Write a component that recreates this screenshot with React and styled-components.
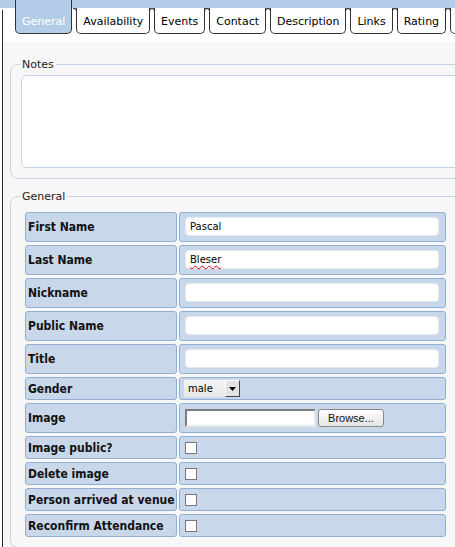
import { Fragment } from "react";
import styled, { createGlobalStyle } from "styled-components";

const tabs = ["General", "Availability", "Events", "Contact", "Description", "Links", "Rating", ""];

const textFields = [
  { label: "First Name", value: "Pascal" },
  { label: "Last Name", value: "Bleser", misspelled: true },
  { label: "Nickname", value: "" },
  { label: "Public Name", value: "" },
  { label: "Title", value: "" },
];

const checkFields = ["Image public?", "Delete image", "Person arrived at venue", "Reconfirm Attendance"];

const GlobalStyle = createGlobalStyle`
  html, body {
    margin: 0;
    padding: 0;
    overflow: hidden;
    background: #fff;
  }
  body {
    font-family: "DejaVu Sans", Verdana, sans-serif;
  }
`;

const Page = styled.div`
  width: 480px;
  min-height: 547px;
  background:
    linear-gradient(#b3cde9, #b3cde9) 0 0 / 100% 8px no-repeat,
    linear-gradient(#2b2b2b, #2b2b2b) 2px 10px / 1px 100% no-repeat,
    #fff;
`;

const TabBar = styled.div`
  display: flex;
  align-items: flex-start;
  gap: 4px;
  height: 34px;
  padding-left: 15px;
`;

const Tab = styled.div`
  position: relative;
  box-sizing: border-box;
  min-width: 30px;
  height: ${({ active }) => (active ? "34px" : "26px")};
  margin-top: ${({ active }) => (active ? "0" : "8px")};
  padding: 0 6px;
  padding-top: ${({ active }) => (active ? "15px" : "7px")};
  border: 1px solid #333;
  border-top: none;
  border-radius: 0 0 5px 5px;
  background: ${({ active }) => (active ? "#b3cde9" : "#fff")};
  color: ${({ active }) => (active ? "#fff" : "#000")};
  font-size: 11px;
  line-height: 14px;
  white-space: nowrap;

  &::before,
  &::after {
    content: "";
    position: absolute;
    top: 0;
    width: 3px;
    height: 3px;
    border-top: 1px solid #333;
    display: ${({ active }) => (active ? "none" : "block")};
  }
  &::before {
    left: -4px;
    border-right: 1px solid #333;
    border-top-right-radius: 3px;
  }
  &::after {
    right: -4px;
    border-left: 1px solid #333;
    border-top-left-radius: 3px;
  }
`;

const Content = styled.div`
  margin: 8px 0 0 3px;
  padding: 16px 0 20px 7px;
  background: #f7f7f7;
  min-height: 490px;
`;

const Fieldset = styled.fieldset`
  margin: ${({ first }) => (first ? "0" : "11px 0 0 0")};
  padding: ${({ first }) => (first ? "4px 0 10px 10px" : "9px 0 10px 14px")};
  border: 1px solid #c3d4ea;
  border-radius: 8px;
  min-width: 0;
`;

const Legend = styled.legend`
  margin-left: ${({ offset }) => offset}px;
  padding: 0 2px;
  font-size: 11px;
  line-height: 13px;
  color: #222;
`;

const Notes = styled.textarea`
  display: block;
  box-sizing: border-box;
  width: 100%;
  height: 93px;
  margin: 0;
  border: 1px solid #c3d4ea;
  border-radius: 6px;
  background: #fff;
  resize: none;
  outline: none;
`;

const Grid = styled.div`
  display: grid;
  grid-template-columns: 152px 267px;
  column-gap: 2px;
  row-gap: 3px;
`;

const Cell = styled.div`
  box-sizing: border-box;
  display: flex;
  align-items: center;
  border: 1px solid #93aed3;
  border-radius: 3px;
  background: #c8d8ea;
`;

const LabelCell = styled(Cell)`
  padding-left: 2px;
  font-family: "DejaVu Sans Condensed", "DejaVu Sans", sans-serif;
  font-stretch: condensed;
  font-size: 12px;
  font-weight: bold;
  color: #111;
  white-space: nowrap;
  min-height: ${({ tall }) => (tall ? "30px" : "23px")};
`;

const ValueCell = styled(Cell)`
  padding: ${({ pad }) => pad || "4px 6px 5px 5px"};
`;

const TextField = styled.div`
  box-sizing: border-box;
  width: 100%;
  height: 19px;
  padding: 0 4px;
  border: 1px solid #e4ebf3;
  border-radius: 4px;
  background: #fff;
  font-size: 10px;
  line-height: 17px;
  color: #000;
`;

const Misspelled = styled.span`
  text-decoration: underline wavy #e00000;
  text-decoration-thickness: 1px;
  text-underline-offset: 2px;
  text-decoration-skip-ink: none;
`;

const Select = styled.div`
  box-sizing: border-box;
  display: flex;
  width: 56px;
  height: 17px;
  background: linear-gradient(#f4f4f4, #e6e6e6);
  font-size: 10px;
  color: #000;
`;

const SelectValue = styled.span`
  flex: 1;
  padding-left: 4px;
  line-height: 17px;
`;

const SelectArrow = styled.span`
  box-sizing: border-box;
  display: flex;
  align-items: center;
  justify-content: center;
  width: 15px;
  height: 17px;
  border: 1px solid;
  border-color: #fff #444 #444 #fff;
  background: #e2e2e2;
`;

const FileRow = styled.div`
  display: flex;
  align-items: center;
  gap: 2px;
`;

const FileBox = styled.div`
  box-sizing: border-box;
  width: 131px;
  height: 18px;
  border: 2px solid;
  border-color: #7b7b7b #e8e8e8 #e8e8e8 #7b7b7b;
  background: #fff;
`;

const BrowseButton = styled.button`
  box-sizing: border-box;
  width: 66px;
  height: 18px;
  padding: 0;
  border: 1px solid #8a8a8a;
  border-radius: 3px;
  background: linear-gradient(#fdfdfd, #e4e4e4);
  font-family: "Liberation Sans", Arial, sans-serif;
  font-size: 11px;
  color: #111;
`;

const Check = styled.input`
  appearance: none;
  box-sizing: border-box;
  width: 12px;
  height: 12px;
  margin: 0;
  border: 1px solid #777;
  background: #fff;
`;

export default function App() {
  return (
    <Page>
      <GlobalStyle />
      <TabBar>
        {tabs.map((t, i) => (
          <Tab key={i} active={i === 0}>
            {t}
          </Tab>
        ))}
      </TabBar>
      <Content>
        <Fieldset first>
          <Legend offset={-1}>Notes</Legend>
          <Notes />
        </Fieldset>
        <Fieldset>
          <Legend offset={-5}>General</Legend>
          <Grid>
            {textFields.map((f) => (
              <Fragment key={f.label}>
                <LabelCell tall>{f.label}</LabelCell>
                <ValueCell>
                  <TextField>{f.misspelled ? <Misspelled>{f.value}</Misspelled> : f.value}</TextField>
                </ValueCell>
              </Fragment>
            ))}
            <LabelCell>Gender</LabelCell>
            <ValueCell pad="2px 4px">
              <Select>
                <SelectValue>male</SelectValue>
                <SelectArrow>
                  <svg width="7" height="4" viewBox="0 0 7 4">
                    <path d="M0 0h7L3.5 4z" fill="#000" />
                  </svg>
                </SelectArrow>
              </Select>
            </ValueCell>
            <LabelCell tall>Image</LabelCell>
            <ValueCell>
              <FileRow>
                <FileBox />
                <BrowseButton>Browse...</BrowseButton>
              </FileRow>
            </ValueCell>
            {checkFields.map((c) => (
              <Fragment key={c}>
                <LabelCell>{c}</LabelCell>
                <ValueCell pad="5px 5px 4px">
                  <Check type="checkbox" />
                </ValueCell>
              </Fragment>
            ))}
          </Grid>
        </Fieldset>
      </Content>
    </Page>
  );
}
